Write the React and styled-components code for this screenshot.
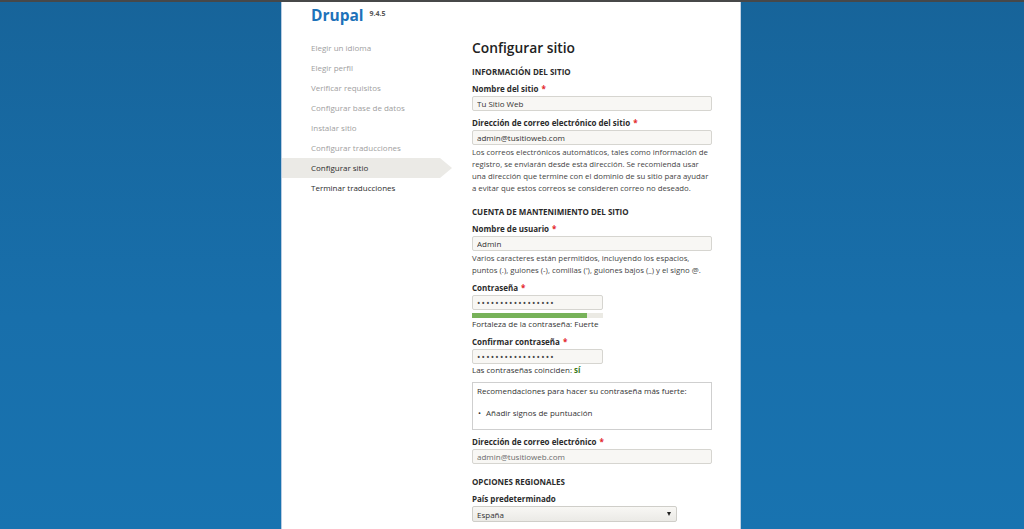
import React from 'react';
import styled, { createGlobalStyle } from 'styled-components';

const GlobalStyle = createGlobalStyle`
    html, body {
        margin: 0;
        padding: 0;
        height: 100%;
    }
    body {
        background: linear-gradient(180deg, #17649a 0%, #186fab 60%, #1873b0 100%);
        font-family: "Open Sans", "DejaVu Sans", sans-serif;
        color: #333;
        overflow: hidden;
    }
`;

const TopLine = styled.div`
    height: 2px;
    background: #474849;
`;
const Page = styled.div`
    display: flex;
    justify-content: center;
`;
const Panel = styled.div`
    width: 460px;
    min-height: 527px;
    box-sizing: border-box;
    background: #fff;
    border-left: 1px solid #b9cce2;
    border-right: 1px solid #c4d3e4;
    margin-right: 2px;
`;
const Header = styled.header`
    display: flex;
    align-items: flex-start;
    gap: 6px;
    height: 34px;
    padding: 2px 0 0 29px;
    box-sizing: border-box;
`;
const Logo = styled.h1`
    margin: 0;
    font-size: 15.5px;
    line-height: 22px;
    font-weight: 700;
    color: #1d72ba;
`;
const Version = styled.span`
    margin-top: 5px;
    font-size: 7px;
    font-weight: 700;
    color: #555;
`;
const Body = styled.div`
    display: grid;
    grid-template-columns: 190px 240px;
`;
const Steps = styled.ol`
    list-style: none;
    margin: 2px 0 0;
    padding: 0;
`;
const Step = styled.li`
    width: 170px;
    height: 20px;
    line-height: 20px;
    padding-left: 29px;
    box-sizing: border-box;
    font-size: 8px;
    color: ${p => (p.$done ? '#a0a0a0' : '#2c2c2c')};
    background: ${p => (p.$active ? '#ebeae6' : 'transparent')};
    clip-path: polygon(0 0, 158px 0, 100% 50%, 158px 100%, 0 100%);
`;
const Main = styled.main`
    display: flex;
    flex-direction: column;
`;
const Title = styled.h2`
    margin: 0 0 6px;
    font-size: 13.8px;
    line-height: 24px;
    font-weight: 600;
    color: #222;
`;
const SectionTitle = styled.h3`
    margin: ${p => (p.$first ? '0' : '6px')} 0 5px;
    font-size: 8px;
    line-height: 12px;
    font-weight: 700;
    text-transform: uppercase;
    color: #2b2b2b;
`;
const FormItem = styled.div`
    margin-bottom: 6px;
`;
const Label = styled.label`
    display: block;
    margin-bottom: 1px;
    font-size: 8px;
    line-height: 12px;
    height: 12px;
    font-weight: 700;
    color: #2b2b2b;
`;
const Required = styled.span`
    margin-left: 3px;
    color: #e3262b;
`;
const Input = styled.input`
    display: block;
    width: ${p => p.$width || '240px'};
    height: 15px;
    box-sizing: border-box;
    margin: 0;
    padding: 0 4px;
    border: 1px solid #d6d5d0;
    border-radius: 2px;
    background: #f8f7f4;
    font-family: inherit;
    font-size: 8px;
    color: ${p => (p.$muted ? '#6b6b6b' : '#333')};
    outline: none;
`;
const SecretInput = styled(Input)`
    font-size: 9px;
    letter-spacing: 1.2px;
    color: #444;
`;
const Description = styled.div`
    margin-top: 1px;
    font-size: 7.8px;
    line-height: 12px;
    color: #444;
`;
const StrengthTrack = styled.div`
    width: 131px;
    height: 5px;
    margin-top: 3px;
    background: #ebeae4;
`;
const StrengthFill = styled.div`
    height: 100%;
    background: #77b259;
`;
const Note = styled.div`
    font-size: 8px;
    line-height: 12px;
    height: 12px;
    color: #333;
`;
const Yes = styled.span`
    color: #3c7a20;
    font-weight: 700;
`;
const Tips = styled.div`
    height: 48px;
    box-sizing: border-box;
    padding: 2px 4px 0;
    border: 1px solid #cfcfcf;
    font-size: 8px;
    line-height: 12px;
    color: #333;
`;
const TipText = styled.p`
    margin: 0 0 10px;
`;
const TipList = styled.ul`
    list-style: none;
    margin: 0;
    padding: 0;
`;
const TipItem = styled.li`
    display: flex;
    gap: 5px;
    &::before {
        content: "•";
        padding-left: 1px;
    }
`;
const SelectBox = styled.div`
    display: flex;
    align-items: center;
    justify-content: space-between;
    width: 205px;
    height: 16px;
    box-sizing: border-box;
    padding: 0 5px 0 4px;
    border: 1px solid #cfcec9;
    border-radius: 2px;
    background: linear-gradient(180deg, #f8f7f4, #ebeae6);
    font-size: 8px;
    color: #333;
`;
const Caret = styled.span`
    width: 0;
    height: 0;
    border-left: 2.5px solid transparent;
    border-right: 2.5px solid transparent;
    border-top: 4px solid #222;
`;

const steps = [
    { name: 'Elegir un idioma', done: true },
    { name: 'Elegir perfil', done: true },
    { name: 'Verificar requisitos', done: true },
    { name: 'Configurar base de datos', done: true },
    { name: 'Instalar sitio', done: true },
    { name: 'Configurar traducciones', done: true },
    { name: 'Configurar sitio', active: true },
    { name: 'Terminar traducciones' },
];

const dots = '•'.repeat(17);

function App() {
    return (
        <>
            <GlobalStyle />
            <TopLine />
            <Page>
                <Panel>
                    <Header>
                        <Logo>Drupal</Logo>
                        <Version>9.4.5</Version>
                    </Header>
                    <Body>
                        <Steps>
                            {steps.map((step, idx) => (
                                <Step key={`step_${idx}`} $done={step.done} $active={step.active}>
                                    {step.name}
                                </Step>
                            ))}
                        </Steps>
                        <Main>
                            <Title>Configurar sitio</Title>

                            <SectionTitle $first>Información del sitio</SectionTitle>
                            <FormItem>
                                <Label>Nombre del sitio<Required>*</Required></Label>
                                <Input defaultValue="Tu Sitio Web" />
                            </FormItem>
                            <FormItem>
                                <Label>Dirección de correo electrónico del sitio<Required>*</Required></Label>
                                <Input defaultValue="admin@tusitioweb.com" />
                                <Description>
                                    Los correos electrónicos automáticos, tales como información de registro, se enviarán desde esta dirección. Se recomienda usar una dirección que termine con el dominio de su sitio para ayudar a evitar que estos correos se consideren correo no deseado.
                                </Description>
                            </FormItem>

                            <SectionTitle>Cuenta de mantenimiento del sitio</SectionTitle>
                            <FormItem>
                                <Label>Nombre de usuario<Required>*</Required></Label>
                                <Input defaultValue="Admin" />
                                <Description>
                                    Varios caracteres están permitidos, incluyendo los espacios, puntos (.), guiones (-), comillas ('), guiones bajos (_) y el signo @.
                                </Description>
                            </FormItem>
                            <FormItem>
                                <Label>Contraseña<Required>*</Required></Label>
                                <SecretInput $width="131px" defaultValue={dots} />
                                <StrengthTrack>
                                    <StrengthFill style={{ width: '88%' }} />
                                </StrengthTrack>
                                <Note>Fortaleza de la contraseña: Fuerte</Note>
                            </FormItem>
                            <FormItem>
                                <Label>Confirmar contraseña<Required>*</Required></Label>
                                <SecretInput $width="131px" defaultValue={dots} />
                                <Note>Las contraseñas coinciden: <Yes>sí</Yes></Note>
                            </FormItem>
                            <FormItem>
                                <Tips>
                                    <TipText>Recomendaciones para hacer su contraseña más fuerte:</TipText>
                                    <TipList>
                                        <TipItem>Añadir signos de puntuación</TipItem>
                                    </TipList>
                                </Tips>
                            </FormItem>
                            <FormItem>
                                <Label>Dirección de correo electrónico<Required>*</Required></Label>
                                <Input $muted defaultValue="admin@tusitioweb.com" />
                            </FormItem>

                            <SectionTitle>Opciones regionales</SectionTitle>
                            <FormItem>
                                <Label>País predeterminado</Label>
                                <SelectBox>
                                    <span>España</span>
                                    <Caret />
                                </SelectBox>
                            </FormItem>
                            <FormItem>
                                <Label>Zona horaria predeterminada</Label>
                            </FormItem>
                        </Main>
                    </Body>
                </Panel>
            </Page>
        </>
    );
}

export default App;
